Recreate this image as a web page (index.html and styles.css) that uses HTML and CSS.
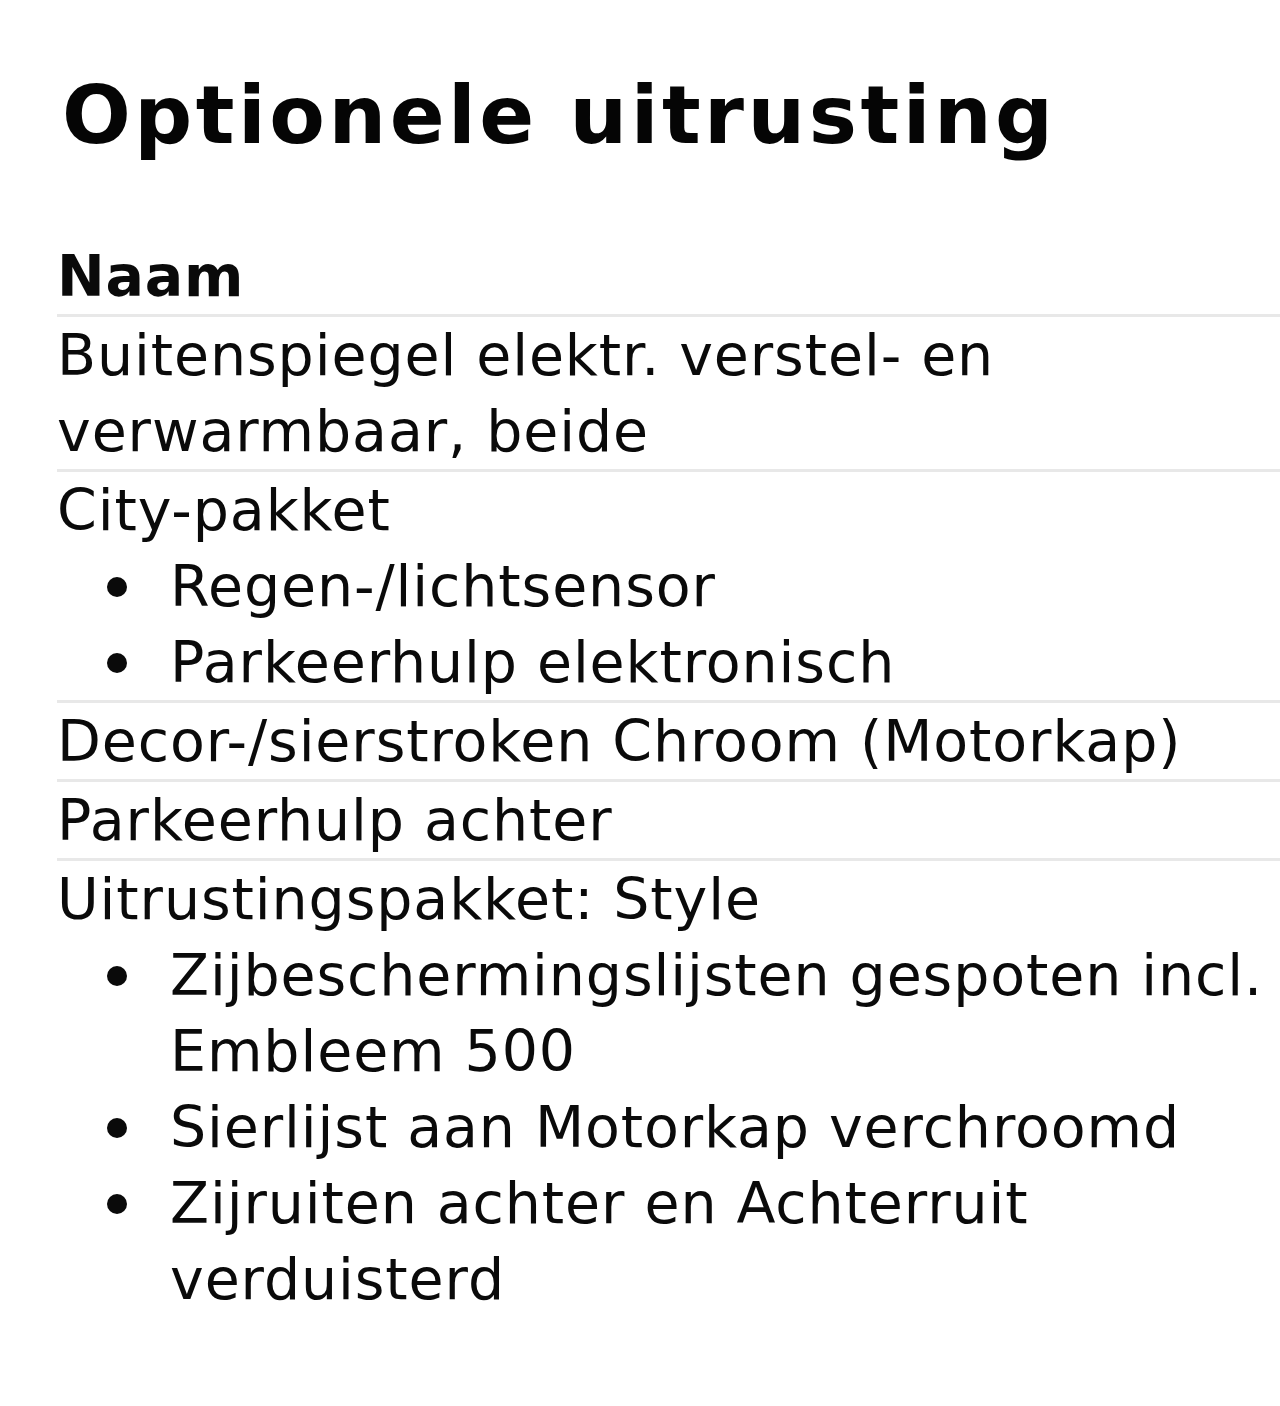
FILE: index.html
```html
<!DOCTYPE html>
<html lang="nl">
<head>
<meta charset="utf-8">
<title>Optionele uitrusting</title>
<link rel="stylesheet" href="styles.css">
</head>
<body>
<main class="page">
  <h1 class="title">Optionele uitrusting</h1>
  <table class="equip">
    <thead>
      <tr><th class="head">Naam</th></tr>
    </thead>
    <tbody>
      <tr><td class="cell">Buitenspiegel elektr. verstel- en verwarmbaar, beide</td></tr>
      <tr><td class="cell">City-pakket
        <ul class="sub">
          <li class="item">Regen-/lichtsensor</li>
          <li class="item">Parkeerhulp elektronisch</li>
        </ul>
      </td></tr>
      <tr><td class="cell">Decor-/sierstroken Chroom (Motorkap)</td></tr>
      <tr><td class="cell">Parkeerhulp achter</td></tr>
      <tr><td class="cell">Uitrustingspakket: Style
        <ul class="sub">
          <li class="item">Zijbeschermingslijsten gespoten incl. Embleem 500</li>
          <li class="item">Sierlijst aan Motorkap verchroomd</li>
          <li class="item">Zijruiten achter en Achterruit verduisterd</li>
        </ul>
      </td></tr>
    </tbody>
  </table>
</main>
</body>
</html>
```

FILE: styles.css
```css
html, body {
  margin: 0;
  padding: 0;
  background: #ffffff;
  overflow-x: hidden;
}

body {
  font-family: "DejaVu Sans", Verdana, sans-serif;
  color: #0a0a0a;
}

.page {
  padding: 67px 0 0 57px;
}

.title {
  margin: 0 0 75px 5px;
  font-size: 81px;
  line-height: 96px;
  font-weight: 700;
  letter-spacing: 3.5px;
  color: #050505;
}

.equip {
  width: 1250px;
  border-collapse: collapse;
  border-spacing: 0;
}

.head {
  text-align: left;
  font-weight: 700;
  font-size: 57px;
  line-height: 76px;
  letter-spacing: 0.8px;
  padding: 0;
}

.cell {
  font-size: 57px;
  line-height: 76px;
  letter-spacing: 0.9px;
  padding: 0;
  border-top: 3px solid #e8e8e8;
  vertical-align: top;
}

.sub {
  margin: 0;
  padding: 0 0 0 113px;
  list-style: none;
}

.item {
  position: relative;
  margin: 0;
}

.item::before {
  content: "";
  position: absolute;
  left: -63px;
  top: 29px;
  width: 20px;
  height: 20px;
  border-radius: 50%;
  background: #0a0a0a;
}
```
